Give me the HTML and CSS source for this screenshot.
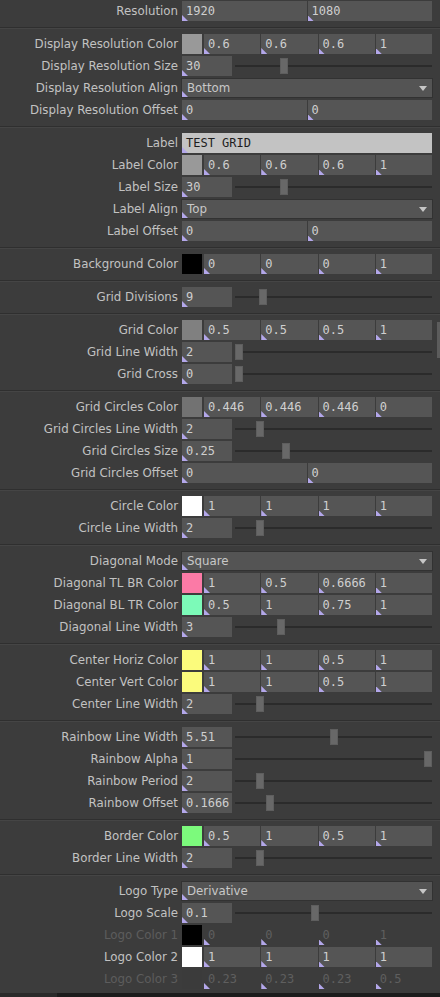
FILE: index.html
```html
<!DOCTYPE html>
<html>
<head>
<meta charset="utf-8">
<link rel="stylesheet" href="styles.css">
</head>
<body>
<div class="panel">
  <div class="section first">
    <div class="row"><span class="label">Resolution</span><div class="fields"><span class="f">1920</span><span class="f">1080</span></div></div>
  </div>

  <div class="section">
    <div class="row"><span class="label">Display Resolution Color</span><div class="fields"><span class="swatch" style="background:#999999"></span><span class="f">0.6</span><span class="f">0.6</span><span class="f">0.6</span><span class="f">1</span></div></div>
    <div class="row"><span class="label">Display Resolution Size</span><div class="fields"><span class="f num">30</span><span class="track"><span class="handle" style="left:46px"></span></span></div></div>
    <div class="row"><span class="label">Display Resolution Align</span><div class="fields"><span class="f menu">Bottom<span class="caret"></span></span></div></div>
    <div class="row"><span class="label">Display Resolution Offset</span><div class="fields"><span class="f">0</span><span class="f">0</span></div></div>
  </div>

  <div class="section">
    <div class="row"><span class="label">Label</span><div class="fields"><span class="f text">TEST GRID</span></div></div>
    <div class="row"><span class="label">Label Color</span><div class="fields"><span class="swatch" style="background:#999999"></span><span class="f">0.6</span><span class="f">0.6</span><span class="f">0.6</span><span class="f">1</span></div></div>
    <div class="row"><span class="label">Label Size</span><div class="fields"><span class="f num">30</span><span class="track"><span class="handle" style="left:46px"></span></span></div></div>
    <div class="row"><span class="label">Label Align</span><div class="fields"><span class="f menu">Top<span class="caret"></span></span></div></div>
    <div class="row"><span class="label">Label Offset</span><div class="fields"><span class="f">0</span><span class="f">0</span></div></div>
  </div>

  <div class="section">
    <div class="row"><span class="label">Background Color</span><div class="fields"><span class="swatch" style="background:#000000"></span><span class="f">0</span><span class="f">0</span><span class="f">0</span><span class="f">1</span></div></div>
  </div>

  <div class="section">
    <div class="row"><span class="label">Grid Divisions</span><div class="fields"><span class="f num">9</span><span class="track"><span class="handle" style="left:25px"></span></span></div></div>
  </div>

  <div class="section">
    <div class="row"><span class="label">Grid Color</span><div class="fields"><span class="swatch" style="background:#808080"></span><span class="f">0.5</span><span class="f">0.5</span><span class="f">0.5</span><span class="f">1</span></div></div>
    <div class="row"><span class="label">Grid Line Width</span><div class="fields"><span class="f num">2</span><span class="track"><span class="handle" style="left:1px"></span></span></div></div>
    <div class="row"><span class="label">Grid Cross</span><div class="fields"><span class="f num">0</span><span class="track"><span class="handle" style="left:1px"></span></span></div></div>
  </div>

  <div class="section">
    <div class="row"><span class="label">Grid Circles Color</span><div class="fields"><span class="swatch" style="background:#727272"></span><span class="f">0.446</span><span class="f">0.446</span><span class="f">0.446</span><span class="f">0</span></div></div>
    <div class="row"><span class="label">Grid Circles Line Width</span><div class="fields"><span class="f num">2</span><span class="track"><span class="handle" style="left:22px"></span></span></div></div>
    <div class="row"><span class="label">Grid Circles Size</span><div class="fields"><span class="f num">0.25</span><span class="track"><span class="handle" style="left:48px"></span></span></div></div>
    <div class="row"><span class="label">Grid Circles Offset</span><div class="fields"><span class="f">0</span><span class="f">0</span></div></div>
  </div>

  <div class="section">
    <div class="row"><span class="label">Circle Color</span><div class="fields"><span class="swatch" style="background:#ffffff"></span><span class="f">1</span><span class="f">1</span><span class="f">1</span><span class="f">1</span></div></div>
    <div class="row"><span class="label">Circle Line Width</span><div class="fields"><span class="f num">2</span><span class="track"><span class="handle" style="left:22px"></span></span></div></div>
  </div>

  <div class="section">
    <div class="row"><span class="label">Diagonal Mode</span><div class="fields"><span class="f menu">Square<span class="caret"></span></span></div></div>
    <div class="row"><span class="label">Diagonal TL BR Color</span><div class="fields"><span class="swatch" style="background:#fb7aa6"></span><span class="f">1</span><span class="f">0.5</span><span class="f">0.6666</span><span class="f">1</span></div></div>
    <div class="row"><span class="label">Diagonal BL TR Color</span><div class="fields"><span class="swatch" style="background:#7cfab8"></span><span class="f">0.5</span><span class="f">1</span><span class="f">0.75</span><span class="f">1</span></div></div>
    <div class="row"><span class="label">Diagonal Line Width</span><div class="fields"><span class="f num">3</span><span class="track"><span class="handle" style="left:43px"></span></span></div></div>
  </div>

  <div class="section">
    <div class="row"><span class="label">Center Horiz Color</span><div class="fields"><span class="swatch" style="background:#fbfb7c"></span><span class="f">1</span><span class="f">1</span><span class="f">0.5</span><span class="f">1</span></div></div>
    <div class="row"><span class="label">Center Vert Color</span><div class="fields"><span class="swatch" style="background:#fbfb7c"></span><span class="f">1</span><span class="f">1</span><span class="f">0.5</span><span class="f">1</span></div></div>
    <div class="row"><span class="label">Center Line Width</span><div class="fields"><span class="f num">2</span><span class="track"><span class="handle" style="left:22px"></span></span></div></div>
  </div>

  <div class="section">
    <div class="row"><span class="label">Rainbow Line Width</span><div class="fields"><span class="f num">5.51</span><span class="track"><span class="handle" style="left:96px"></span></span></div></div>
    <div class="row"><span class="label">Rainbow Alpha</span><div class="fields"><span class="f num">1</span><span class="track"><span class="handle" style="left:190px"></span></span></div></div>
    <div class="row"><span class="label">Rainbow Period</span><div class="fields"><span class="f num">2</span><span class="track"><span class="handle" style="left:22px"></span></span></div></div>
    <div class="row"><span class="label">Rainbow Offset</span><div class="fields"><span class="f num">0.1666</span><span class="track"><span class="handle" style="left:32px"></span></span></div></div>
  </div>

  <div class="section">
    <div class="row"><span class="label">Border Color</span><div class="fields"><span class="swatch" style="background:#7cfa7c"></span><span class="f">0.5</span><span class="f">1</span><span class="f">0.5</span><span class="f">1</span></div></div>
    <div class="row"><span class="label">Border Line Width</span><div class="fields"><span class="f num">2</span><span class="track"><span class="handle" style="left:22px"></span></span></div></div>
  </div>

  <div class="section last">
    <div class="row"><span class="label">Logo Type</span><div class="fields"><span class="f menu">Derivative<span class="caret"></span></span></div></div>
    <div class="row"><span class="label">Logo Scale</span><div class="fields"><span class="f num">0.1</span><span class="track"><span class="handle" style="left:77px"></span></span></div></div>
    <div class="row disabled"><span class="label">Logo Color 1</span><div class="fields"><span class="swatch" style="background:#000000"></span><span class="f">0</span><span class="f">0</span><span class="f">0</span><span class="f">1</span></div></div>
    <div class="row"><span class="label">Logo Color 2</span><div class="fields"><span class="swatch" style="background:#ffffff"></span><span class="f">1</span><span class="f">1</span><span class="f">1</span><span class="f">1</span></div></div>
    <div class="row disabled"><span class="label">Logo Color 3</span><div class="fields"><span class="swatch" style="background:#3b3b3b"></span><span class="f">0.23</span><span class="f">0.23</span><span class="f">0.23</span><span class="f">0.5</span></div></div>
  </div>

  <div class="footer"><span class="footer-left"></span></div>
  <span class="scrollthumb"></span>
</div>
</body>
</html>
```
FILE: styles.css
```css
html, body {
  margin: 0;
  padding: 0;
  background: #3c3c3c;
}

.panel {
  position: relative;
  width: 440px;
  height: 997px;
  overflow: hidden;
  background: #3c3c3c;
  font-family: "DejaVu Sans", Verdana, sans-serif;
}

.section {
  display: flex;
  flex-direction: column;
  gap: 2px;
  padding: 6px 0 6px;
  border-bottom: 1px solid #2f2f2f;
  box-shadow: 0 1px 0 #454545;
}

.section.first {
  padding-top: 1px;
}

.section.last {
  padding-bottom: 4px;
  border-bottom: none;
  box-shadow: none;
}

.row {
  display: grid;
  grid-template-columns: 178px 250px;
  column-gap: 4px;
  height: 20px;
}

.label {
  text-align: right;
  font-size: 11.8px;
  line-height: 20px;
  color: #c2c2c2;
  white-space: nowrap;
}

.fields {
  display: flex;
  gap: 1px;
  height: 20px;
}

.f {
  position: relative;
  flex: 1 1 0;
  min-width: 0;
  background: #555555;
  color: #cfcfcf;
  font-family: "DejaVu Sans Mono", "Liberation Mono", monospace;
  font-size: 12px;
  line-height: 20px;
  padding-left: 4px;
  white-space: nowrap;
  overflow: hidden;
}

.f::before {
  content: "";
  position: absolute;
  left: 0;
  bottom: 0;
  width: 6px;
  height: 6px;
  background: #b3a7ea;
  clip-path: polygon(0 0, 0 100%, 100% 100%);
}

.swatch {
  flex: 0 0 20px;
  height: 20px;
  margin-right: 1px;
}

.f.num {
  flex: 0 0 46px;
}

.f.text {
  background: #c3c3c3;
  color: #1e1e1e;
}

.f.menu {
  font-family: "DejaVu Sans", Verdana, sans-serif;
  font-size: 11.8px;
  line-height: 18px;
  padding-left: 5px;
  height: 18px;
  margin-top: 1px;
  background: #545454;
  box-shadow: 0 0 0 1px #323232;
  color: #c8c8c8;
}

.caret {
  position: absolute;
  right: 5px;
  top: 7px;
  width: 0;
  height: 0;
  border-left: 4px solid transparent;
  border-right: 4px solid transparent;
  border-top: 5px solid #c6c6c6;
}

.track {
  position: relative;
  flex: 1 1 auto;
  margin-left: 1px;
}

.track::before {
  content: "";
  position: absolute;
  left: 1px;
  right: 0;
  top: 9px;
  height: 2px;
  background: #2b2b2b;
}

.handle {
  position: absolute;
  top: 2px;
  width: 8px;
  height: 16px;
  background: #686868;
  box-shadow: inset 0 0 0 1px #5e5e5e;
}

.row.disabled .label {
  color: #5d5d5d;
}

.row.disabled .f {
  background: transparent;
  color: #5f5f5f;
}

.footer {
  display: flex;
  height: 4px;
  background: #1c1c1c;
}

.footer-left {
  width: 57px;
  background: #2a2a2a;
}

.scrollthumb {
  position: absolute;
  left: 437px;
  top: 322px;
  width: 3px;
  height: 36px;
  background: #5c5c5c;
}
```
